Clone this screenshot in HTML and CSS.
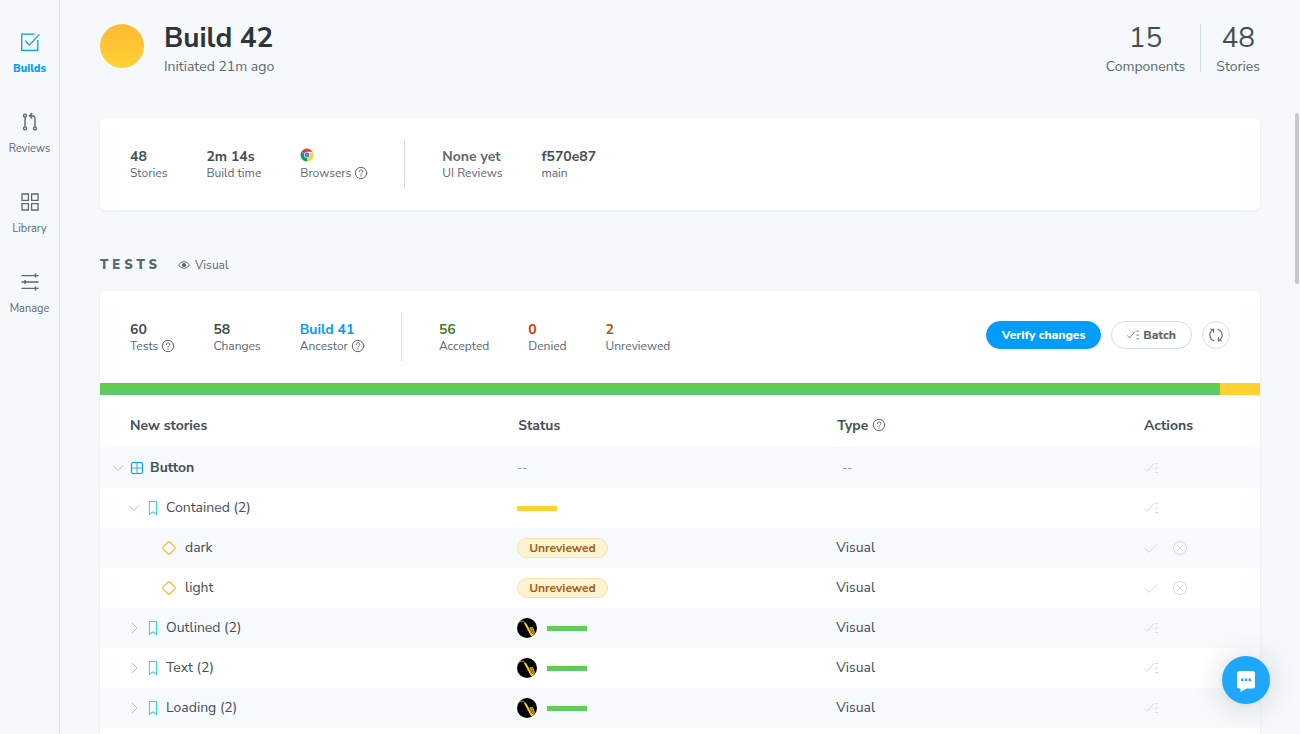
FILE: index.html
```html
<!DOCTYPE html>
<html lang="en">
<head>
<meta charset="utf-8">
<meta name="viewport" content="width=device-width, initial-scale=1">
<title>Build 42</title>
<link rel="stylesheet" href="styles.css">
</head>
<body>
<svg class="sprite" aria-hidden="true">
  <symbol id="help" viewBox="0 0 14 14"><g fill="none" stroke="currentColor" stroke-linecap="round"><circle cx="7" cy="7" r="5.7"/><path d="M5.200 5.600C5.200 3.300 8.800 3.300 8.800 5.500C8.800 6.800 7 6.800 7 8.100"/></g><circle cx="7" cy="9.900" r=".7" fill="currentColor"/></symbol>
  <symbol id="batch" viewBox="0 0 14 14"><path d="M.4 7.600L3.200 10.400L9.300 2.800" fill="none" stroke="currentColor"/><path d="M11 2.500h3M11 7h3M11 11.500h3" fill="none" stroke="currentColor"/></symbol>
  <symbol id="check" viewBox="0 0 14 14"><path d="M.4 6.800L5 11.400L13.700 2.600" fill="none" stroke="currentColor"/></symbol>
  <symbol id="deny" viewBox="0 0 14 14"><g fill="none" stroke="currentColor"><circle cx="7" cy="7" r="6.500"/><path d="M4.200 4.200l5.600 5.600M9.800 4.200L4.200 9.800"/></g></symbol>
  <symbol id="down" viewBox="0 0 12 12"><path d="M1 3.500l5 5 5-5" fill="none" stroke="currentColor"/></symbol>
  <symbol id="right" viewBox="0 0 12 12"><path d="M4 1l5 5-5 5" fill="none" stroke="currentColor"/></symbol>
  <symbol id="component" viewBox="0 0 14 14"><g fill="none" stroke="currentColor"><rect x="1.500" y="1.500" width="11" height="11" rx="1.500" stroke-width="1.200"/><path d="M7 1.500v11M1.500 7h11" opacity=".8"/></g></symbol>
  <symbol id="bookmark" viewBox="0 0 14 14"><path d="M3.500.5h7v12.700L7 10.800l-3.500 2.400z" fill="none" stroke="currentColor" stroke-width="1.100"/></symbol>
  <symbol id="story" viewBox="0 0 14 14"><rect x="2.200" y="2.200" width="9.600" height="9.600" rx="1.500" transform="rotate(45 7 7)" fill="none" stroke="currentColor" stroke-width="1.200"/></symbol>
  <symbol id="avatar" viewBox="0 0 20 20"><circle cx="10" cy="10" r="10" fill="#000"/><path d="M2 4.200Q4 2.800 6.800 3.400L8.500 6" fill="none" stroke="#b8860f"/><path d="M8 5L14.600 17L16.400 16.500" fill="none" stroke="#f7c82e" stroke-width="2"/><path d="M16.400 16.800L17.600 14.400L15.700 9.600L12.800 9.800L14.200 12.600L16 15.500" fill="#9a7114" stroke="#e3b026" stroke-width=".9"/></symbol>
</svg>
<div class="app">
  <nav class="sidebar" aria-label="Project">
    <a class="nav-item active" href="#builds"><svg viewBox="0 0 20 20"><g fill="none" stroke="currentColor" stroke-width="1.300"><path d="M14.500 2.200H1.700v16.100h16.100V8"/><path d="M5.200 8.700l4.200 4.200L19.500 2.400"/></g></svg>Builds</a>
    <a class="nav-item" href="#reviews"><svg viewBox="0 0 20 20"><g fill="none" stroke="currentColor" stroke-width="1.400"><circle cx="5" cy="3.600" r="1.500"/><circle cx="5" cy="16.400" r="1.500"/><circle cx="15" cy="16.400" r="1.500"/><path d="M5 5.200v9.600M15 14.800V7Q15 3.700 12 3.700H9.600"/><path d="M12.300 1L9.600 3.700l2.700 2.700"/></g></svg>Reviews</a>
    <a class="nav-item" href="#library"><svg viewBox="0 0 20 20"><g fill="none" stroke="currentColor" stroke-width="1.300"><path d="M2 2h6.400v6.400H2zM11.600 2H18v6.400h-6.400zM2 11.600h6.400V18H2zM11.600 11.600H18V18h-6.400z"/></g></svg>Library</a>
    <a class="nav-item" href="#manage"><svg viewBox="0 0 20 20"><path d="M1.500 3.600h17M1.500 10h17M1.500 16.400h17" stroke="currentColor" stroke-width="1.300"/><path d="M15.500 1.600v4M5 8v4M15.500 14.400v4" stroke="currentColor" stroke-width="1.500"/></svg>Manage</a>
  </nav>
  <main class="page">
    <header class="page-head">
      <span class="build-dot"></span>
      <div class="build-name"><h1>Build 42</h1><p>Initiated 21m ago</p></div>
      <div class="totals">
        <div class="total"><strong>15</strong><span>Components</span></div>
        <span class="divider"></span>
        <div class="total"><strong>48</strong><span>Stories</span></div>
      </div>
    </header>

    <section class="card summary">
      <div class="stat-group">
        <div class="stat"><b>48</b><span>Stories</span></div>
        <div class="stat"><b>2m 14s</b><span>Build time</span></div>
        <div class="stat"><b class="browser"><svg class="chrome" viewBox="0 0 14 14" role="img" aria-label="Chrome"><path d="M7 7L1.400 3.800A6.500 6.500 0 0 1 12.600 3.800H7z" fill="#db4437"/><path d="M7 7L12.600 3.800A6.500 6.500 0 0 1 7 13.500z" fill="#ffcd40"/><path d="M7 7V13.500A6.500 6.500 0 0 1 1.400 3.800z" fill="#0f9d58"/><circle cx="7" cy="7" r="3" fill="#f1f1f1"/><circle cx="7" cy="7" r="2.400" fill="#4285f4"/></svg></b><span>Browsers <svg class="help"><use href="#help"/></svg></span></div>
      </div>
      <div class="stat-group">
        <div class="stat muted"><b>None yet</b><span>UI Reviews</span></div>
        <div class="stat"><b>f570e87</b><span>main</span></div>
      </div>
    </section>

    <div class="section-head">
      <h2>TESTS</h2>
      <span class="kind"><svg viewBox="0 0 12 12"><path d="M.5 6Q6-.8 11.500 6Q6 12.800.5 6z" fill="none" stroke="currentColor"/><circle cx="6" cy="6" r="2.100" fill="currentColor"/></svg>Visual</span>
    </div>

    <section class="card tall">
      <div class="summary">
        <div class="stat-group">
          <div class="stat"><b>60</b><span>Tests <svg class="help"><use href="#help"/></svg></span></div>
          <div class="stat"><b>58</b><span>Changes</span></div>
          <div class="stat"><a href="#build-41">Build 41</a><span>Ancestor <svg class="help"><use href="#help"/></svg></span></div>
        </div>
        <div class="stat-group">
          <div class="stat accepted"><b>56</b><span>Accepted</span></div>
          <div class="stat denied"><b>0</b><span>Denied</span></div>
          <div class="stat unreviewed"><b>2</b><span>Unreviewed</span></div>
        </div>
        <div class="buttons">
          <button class="btn primary" type="button">Verify changes</button>
          <button class="btn" type="button"><svg class="icon small"><use href="#batch"/></svg>Batch</button>
          <button class="btn round" type="button" aria-label="Rerun build"><svg viewBox="0 0 14 14"><g fill="none" stroke="currentColor" stroke-width="1.100"><path d="M5.200 12.800A6 6 0 0 1 3.800 1.900M8.800 1.200A6 6 0 0 1 10.200 12.100"/><path d="M1.200 1.200h3.400v3.600M12.800 12.800H9.400V9.200"/></g></svg></button>
        </div>
      </div>
      <div class="progress"><span class="done"></span><span class="todo"></span></div>
      <table class="tests">
        <colgroup><col class="c-name"><col class="c-status"><col class="c-type"><col class="c-actions"></colgroup>
        <thead><tr><th>New stories</th><th>Status</th><th>Type <svg class="help"><use href="#help"/></svg></th><th>Actions</th></tr></thead>
        <tbody>
          <tr class="group"><td><div class="cell"><svg class="chev"><use href="#down"/></svg><svg class="icon blue"><use href="#component"/></svg>Button</div></td><td class="none">--</td><td class="none indent">--</td><td><div class="actions"><button type="button" aria-label="Batch accept"><svg class="icon"><use href="#batch"/></svg></button></div></td></tr>
          <tr><td><div class="cell l1"><svg class="chev"><use href="#down"/></svg><svg class="icon teal"><use href="#bookmark"/></svg>Contained (2)</div></td><td><span class="bar yellow"></span></td><td></td><td><div class="actions"><button type="button" aria-label="Batch accept"><svg class="icon"><use href="#batch"/></svg></button></div></td></tr>
          <tr><td><div class="cell l2"><svg class="icon gold"><use href="#story"/></svg>dark</div></td><td><span class="badge">Unreviewed</span></td><td>Visual</td><td><div class="actions"><button type="button" aria-label="Accept"><svg class="icon"><use href="#check"/></svg></button><button type="button" aria-label="Deny"><svg class="icon"><use href="#deny"/></svg></button></div></td></tr>
          <tr><td><div class="cell l2"><svg class="icon gold"><use href="#story"/></svg>light</div></td><td><span class="badge">Unreviewed</span></td><td>Visual</td><td><div class="actions"><button type="button" aria-label="Accept"><svg class="icon"><use href="#check"/></svg></button><button type="button" aria-label="Deny"><svg class="icon"><use href="#deny"/></svg></button></div></td></tr>
          <tr><td><div class="cell l1"><svg class="chev"><use href="#right"/></svg><svg class="icon teal"><use href="#bookmark"/></svg>Outlined (2)</div></td><td><div class="review"><svg class="avatar"><use href="#avatar"/></svg><span class="bar green"></span></div></td><td>Visual</td><td><div class="actions"><button type="button" aria-label="Batch accept"><svg class="icon"><use href="#batch"/></svg></button></div></td></tr>
          <tr><td><div class="cell l1"><svg class="chev"><use href="#right"/></svg><svg class="icon teal"><use href="#bookmark"/></svg>Text (2)</div></td><td><div class="review"><svg class="avatar"><use href="#avatar"/></svg><span class="bar green"></span></div></td><td>Visual</td><td><div class="actions"><button type="button" aria-label="Batch accept"><svg class="icon"><use href="#batch"/></svg></button></div></td></tr>
          <tr><td><div class="cell l1"><svg class="chev"><use href="#right"/></svg><svg class="icon teal"><use href="#bookmark"/></svg>Loading (2)</div></td><td><div class="review"><svg class="avatar"><use href="#avatar"/></svg><span class="bar green"></span></div></td><td>Visual</td><td><div class="actions"><button type="button" aria-label="Batch accept"><svg class="icon"><use href="#batch"/></svg></button></div></td></tr>
        </tbody>
      </table>
    </section>
  </main>
  <span class="scroll-thumb"></span>
  <button class="chat" type="button" aria-label="Open chat"><svg viewBox="0 0 24 24"><path d="M5.500 3h13Q21 3 21 5.500v12.500Q21 20.500 18.500 20.500H12.500L6.500 24V20.500H5.500Q3 20.500 3 18V5.500Q3 3 5.500 3z" fill="#fff"/><path d="M7 10.500h2.400v2.400H7zM10.800 10.500h2.400v2.400h-2.400zM14.600 10.500H17v2.400h-2.400z" fill="#1ea7fd"/></svg></button>
</div>
</body>
</html>
```
FILE: styles.css
```css
* { box-sizing: border-box; }
body {
  margin: 0;
  background: #f6f9fc;
  color: #454e54;
  font: 14px/20px "Nunito Sans", Nunito, "Open Sans", sans-serif;
}
h1, h2, p { margin: 0; }
a { color: inherit; text-decoration: none; }
button { font: inherit; color: inherit; cursor: pointer; }
svg { display: block; flex: none; }
.sprite { display: none; }

.app { display: flex; height: 100vh; overflow: hidden; }

.sidebar {
  flex: none;
  width: 60px;
  padding-top: 32px;
  border-right: 1px solid #d3dee2;
  display: flex;
  flex-direction: column;
  gap: 35px;
}
.nav-item {
  display: flex;
  flex-direction: column;
  align-items: center;
  gap: 9px;
  color: #5c6870;
  font-size: 11px;
  line-height: 16px;
}
.nav-item svg { width: 20px; height: 20px; }
.nav-item.active { color: #029cfd; font-weight: 800; }

.page { flex: 1; min-width: 0; padding: 21px 40px 40px; }

.page-head { display: flex; align-items: flex-start; gap: 20px; }
.build-dot {
  width: 44px;
  height: 44px;
  margin-top: 3px;
  border-radius: 50%;
  background: linear-gradient(#ffba33, #ffd133);
}
.build-name { color: #5c6870; }
.build-name h1 { margin-bottom: 2px; color: #2e3438; font-size: 28px; line-height: 34px; }
.totals { display: flex; gap: 15px; margin-left: auto; }
.total { display: flex; flex-direction: column; gap: 2px; text-align: center; color: #5c6870; }
.total strong { color: #454e54; font-size: 28px; line-height: 34px; font-weight: 400; }
.divider { width: 1px; height: 48px; margin-top: 3px; background: #d3dee2; }

.card {
  background: #fff;
  border-radius: 5px;
  box-shadow: 0 1px 3px rgba(0, 0, 0, .07);
}
.card.tall { padding-bottom: 40px; }
.page-head + .card { margin-top: 41px; }
.summary { display: flex; align-items: center; padding: 22px 30px; }
.stat-group { display: flex; align-items: center; gap: 39px; height: 48px; }
.stat-group + .stat-group { margin-left: 37px; padding-left: 37px; border-left: 1px solid #d3dee2; }
.stat b, .stat a { display: flex; align-items: center; height: 18px; padding-top: 2px; font-weight: 700; }
.stat .browser { padding: 0 0 2px; }
.stat a { color: #029cfd; }
.stat > span { display: flex; align-items: center; gap: 3px; height: 16px; color: #5c6870; font-size: 12px; }
.stat.muted b { color: #5c6870; }
.stat.accepted b { color: #448028; }
.stat.denied b { color: #d43900; }
.stat.unreviewed b { color: #a15c20; }
.help { width: 14px; height: 14px; margin-right: -1px; color: #5c6870; }
.chrome { width: 14px; height: 14px; }

.section-head { display: flex; align-items: center; gap: 17px; margin: 43px 0 15px; color: #5c6870; }
.section-head h2 { padding-top: 2px; font-size: 13px; line-height: 21px; font-weight: 900; letter-spacing: 4px; }
.kind { display: flex; align-items: center; gap: 5px; font-size: 12px; }
.kind svg { width: 12px; height: 12px; }

.buttons { display: flex; align-self: flex-start; gap: 10px; margin: 8px 0 0 auto; }
.btn {
  display: flex;
  align-items: center;
  justify-content: center;
  gap: 4px;
  height: 28px;
  padding: 0 15px;
  border: 1px solid #d3dee6;
  border-radius: 14px;
  background: #fff;
  color: #5c6870;
  font-size: 12px;
  font-weight: 800;
}
.btn.primary { border-color: #029cfd; background: #029cfd; color: #fff; }
.btn.round { width: 28px; padding: 0; }
.btn.round svg { width: 14px; height: 14px; }
.icon { width: 14px; height: 14px; }
.icon.small { width: 12px; height: 12px; }

.progress { display: flex; height: 12px; }
.done { flex: 28; background: linear-gradient(#62d03f, #5ec877); }
.todo { flex: 1; background: #ffd133; }

.tests { width: 100%; table-layout: fixed; border-collapse: collapse; }
.c-name { width: 35.96%; }
.c-status { width: 27.5%; }
.c-type { width: 26.54%; }
.c-actions { width: 10%; }
.tests th { height: 52px; padding: 10px 0 0 1px; text-align: left; font-weight: 700; vertical-align: middle; }
.tests th:first-child { padding-left: 30px; }
.tests th:last-child { padding-left: 0; }
.tests th .help { display: inline-block; vertical-align: -2px; }
.tests td { height: 40px; padding: 0; vertical-align: middle; }
.tests .group td { height: 41px; }
.tests tbody tr:nth-child(odd) { background: #f7fafd; }
.group .cell { font-weight: 700; }
.tests .none { color: #7f8a91; font-size: 12px; }
.tests .indent { padding-left: 6px; }
.cell { display: flex; align-items: center; gap: 6px; padding-left: 12px; }
.cell.l1 { padding-left: 28px; }
.cell.l2 { padding-left: 62px; gap: 9px; }
.chev { width: 12px; height: 12px; color: #b5bdc2; }
.blue { color: #029cfd; }
.teal { color: #37d5d3; }
.gold { color: #fcb62d; }
.bar { display: block; width: 40px; height: 5px; }
.yellow { background: #ffd133; }
.green { background: linear-gradient(#62d03f, #5ec877); }
.badge {
  display: block;
  width: max-content;
  padding: 0 11px;
  border: 1px solid #f7e1ac;
  border-radius: 10px;
  background: #fff4cf;
  color: #a15c20;
  font-size: 12px;
  line-height: 18px;
  font-weight: 700;
}
.review { display: flex; align-items: center; gap: 10px; }
.avatar { width: 20px; height: 20px; }
.actions { display: flex; gap: 15px; }
.actions button { padding: 0; border: 0; background: none; color: #d5d9dc; }

.scroll-thumb {
  position: fixed;
  top: 113px;
  right: 1px;
  width: 4px;
  height: 171px;
  border-radius: 2px;
  background: #c6c8ca;
}
.chat {
  position: fixed;
  right: 30px;
  bottom: 30px;
  display: flex;
  align-items: center;
  justify-content: center;
  width: 48px;
  height: 48px;
  padding: 0;
  border: 0;
  border-radius: 50%;
  background: #1ea7fd;
  box-shadow: 0 1px 6px rgba(0, 0, 0, .06), 0 2px 32px rgba(0, 0, 0, .16);
}
.chat svg { width: 24px; height: 24px; }
```
